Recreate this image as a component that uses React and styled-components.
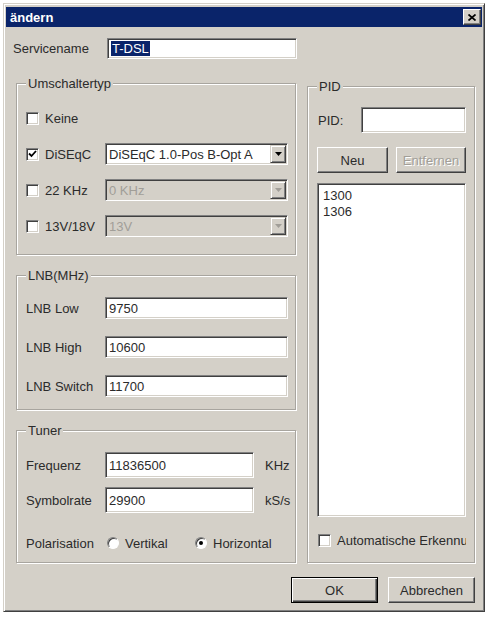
import React from "react"
import styled, { createGlobalStyle } from "styled-components"

const Face = "#d4d0c8"
const Shadow = "#808080"
const DarkShadow = "#404040"
const Highlight = "#ffffff"
const Ink = "#2b2b2b"
const GreyInk = "#a19e98"
const Navy = "#0a246a"

const GlobalStyle = createGlobalStyle`
  html, body {
    margin: 0;
    background: #fff;
  }
  body {
    font-family: "Liberation Sans", Arial, sans-serif;
    font-size: 13px;
    color: ${Ink};
  }
  * {
    box-sizing: border-box;
  }
`

const sunken = `
  border: 1px solid;
  border-color: ${Shadow} ${Highlight} ${Highlight} ${Shadow};
  box-shadow: inset 1px 1px 0 ${DarkShadow}, inset -1px -1px 0 ${Face};
`

const raised = `
  border: 1px solid;
  border-color: ${Highlight} ${DarkShadow} ${DarkShadow} ${Highlight};
  box-shadow: inset -1px -1px 0 ${Shadow};
`

const Window = styled.div`
  width: 482px;
  height: 609px;
  margin: 3px 0 0 3px;
  padding: 3px 2px 2px 2px;
  display: flex;
  flex-direction: column;
  background: ${Face};
  border: 1px solid;
  border-color: ${Face} ${DarkShadow} ${DarkShadow} ${Face};
  box-shadow: inset 1px 1px 0 ${Highlight}, inset -1px -1px 0 ${Shadow};
`

const TitleBar = styled.div`
  display: flex;
  align-items: center;
  height: 20px;
  padding-left: 4px;
  background: ${Navy};
`

const Title = styled.span`
  color: #fff;
  font-weight: bold;
  font-size: 13px;
`

const CloseButton = styled.div`
  display: flex;
  align-items: center;
  justify-content: center;
  width: 18px;
  height: 16px;
  margin-left: auto;
  margin-right: 1px;
  background: ${Face};
  ${raised}
`

const Body = styled.div`
  flex: 1;
  display: flex;
  flex-direction: column;
  padding: 11px 7px 6px 10px;
`

const ServiceRow = styled.div`
  display: flex;
  align-items: center;
  margin-left: -3px;
`

const RowLabel = styled.span`
  width: ${(p) => p.$width || 94}px;
  white-space: nowrap;
`

const TextField = styled.div`
  display: flex;
  align-items: center;
  width: ${(p) => (p.$width ? `${p.$width}px` : "100%")};
  height: ${(p) => p.$height || 22}px;
  padding-left: 3px;
  background: #fff;
  white-space: nowrap;
  ${sunken}
`

const Selection = styled.span`
  background: ${Navy};
  color: #fff;
  padding: 0 1px;
  line-height: 15px;
`

const Columns = styled.div`
  display: flex;
  gap: 11px;
  margin-top: 24px;
`

const LeftColumn = styled.div`
  width: 280px;
  display: flex;
  flex-direction: column;
  gap: 20px;
`

const GroupBox = styled.div`
  display: flex;
  flex-direction: column;
  padding: 0 ${(p) => p.$pr || 8}px ${(p) => p.$pb}px 9px;
  border: 1px solid #a8a59f;
  box-shadow: inset 1px 1px 0 ${Highlight}, 1px 1px 0 ${Highlight};
`

const PidGroup = styled(GroupBox)`
  width: 168px;
  margin-top: 3px;
`

const Legend = styled.span`
  align-self: flex-start;
  margin: -8px 0 ${(p) => p.$mb}px 0;
  padding: 0 2px;
  line-height: 15px;
  background: ${Face};
`

const Rows = styled.div`
  display: flex;
  flex-direction: column;
  gap: ${(p) => p.$gap}px;
`

const FieldRow = styled.div`
  display: grid;
  grid-template-columns: ${(p) => p.$cols};
  align-items: center;
  height: ${(p) => p.$height || 22}px;
  margin-top: ${(p) => p.$top || 0}px;
`

const CheckLabel = styled.label`
  display: flex;
  align-items: center;
  gap: 6px;
  white-space: nowrap;
  overflow: hidden;
`

const Box = styled.span`
  flex: none;
  display: flex;
  align-items: center;
  justify-content: center;
  width: 13px;
  height: 13px;
  background: #fff;
  ${sunken}
`

const RadioCircle = styled.span`
  flex: none;
  display: flex;
  align-items: center;
  justify-content: center;
  width: 12px;
  height: 12px;
  border-radius: 50%;
  background: #fff;
  border: 1px solid;
  border-color: ${Shadow} ${Highlight} ${Highlight} ${Shadow};
  box-shadow: inset 1px 1px 0 ${DarkShadow};
`

const RadioDot = styled.span`
  width: 4px;
  height: 4px;
  border-radius: 50%;
  background: #000;
`

const Select = styled.div`
  display: flex;
  align-items: center;
  height: 22px;
  padding-left: 3px;
  background: ${(p) => (p.$disabled ? Face : "#fff")};
  color: ${(p) => (p.$disabled ? GreyInk : Ink)};
  ${sunken}
`

const SelectText = styled.span`
  flex: 1;
  white-space: nowrap;
  overflow: hidden;
`

const DropButton = styled.span`
  display: flex;
  align-items: center;
  justify-content: center;
  width: 16px;
  height: 18px;
  margin: 1px;
  background: ${Face};
  border: 1px solid;
  border-color: ${Face} ${DarkShadow} ${DarkShadow} ${Face};
  box-shadow: inset 1px 1px 0 ${Highlight}, inset -1px -1px 0 ${Shadow};
`

const Unit = styled.span`
  padding-left: 11px;
`

const PidRow = styled.div`
  display: flex;
  align-items: center;
  justify-content: space-between;
  padding-left: 1px;
`

const ButtonRow = styled.div`
  display: flex;
  gap: 8px;
  margin-top: 14px;
`

const PushButton = styled.button`
  width: ${(p) => p.$width}px;
  height: 26px;
  padding: 0;
  font: inherit;
  color: ${(p) => (p.disabled ? GreyInk : Ink)};
  text-shadow: ${(p) => (p.disabled ? `1px 1px 0 ${Highlight}` : "none")};
  background: ${Face};
  ${raised}
  ${(p) =>
    p.$default &&
    `
    border-color: #000;
    box-shadow: inset 1px 1px 0 ${Highlight}, inset -1px -1px 0 ${DarkShadow}, inset -2px -2px 0 ${Shadow};
  `}
`

const ListBox = styled.div`
  flex: 1;
  margin-top: 10px;
  padding: 4px 5px;
  background: #fff;
  line-height: 16px;
  ${sunken}
`

const AutoRow = styled(CheckLabel)`
  margin-top: 16px;
  height: 14px;
  padding-left: 1px;
`

const Footer = styled.div`
  display: flex;
  justify-content: flex-end;
  gap: 10px;
  margin-top: 14px;
`

const Arrow = ({ disabled }) => (
  <svg width="7" height="4" viewBox="0 0 7 4">
    <path d="M0 0h7L3.5 4z" fill={disabled ? GreyInk : "#000"} />
  </svg>
)

const CheckBox = ({ checked }) => (
  <Box>
    {checked && (
      <svg width="9" height="8" viewBox="0 0 9 8">
        <path d="M1 3.5l2.5 2.5L8 1" stroke="#000" strokeWidth="1.8" fill="none" />
      </svg>
    )}
  </Box>
)

const Radio = ({ checked, children }) => (
  <CheckLabel>
    <RadioCircle>{checked && <RadioDot />}</RadioCircle>
    {children}
  </CheckLabel>
)

const Dropdown = ({ value, disabled }) => (
  <Select $disabled={disabled}>
    <SelectText>{value}</SelectText>
    <DropButton>
      <Arrow disabled={disabled} />
    </DropButton>
  </Select>
)

const switchRows = [
  { label: "Keine" },
  { label: "DiSEqC", checked: true, value: "DiSEqC 1.0-Pos B-Opt A" },
  { label: "22 KHz", value: "0 KHz", disabled: true },
  { label: "13V/18V", value: "13V", disabled: true },
]

const lnbRows = [
  { label: "LNB Low", value: "9750" },
  { label: "LNB High", value: "10600" },
  { label: "LNB Switch", value: "11700" },
]

const App = () => (
  <>
    <GlobalStyle />
    <Window>
      <TitleBar>
        <Title>ändern</Title>
        <CloseButton>
          <svg width="8" height="7" viewBox="0 0 8 7">
            <path d="M0.5 0.5l7 6M7.5 0.5l-7 6" stroke="#000" strokeWidth="1.7" />
          </svg>
        </CloseButton>
      </TitleBar>
      <Body>
        <ServiceRow>
          <RowLabel>Servicename</RowLabel>
          <TextField $width={190} $height={21}>
            <Selection>T-DSL</Selection>
          </TextField>
        </ServiceRow>

        <Columns>
          <LeftColumn>
            <GroupBox $pb={17}>
              <Legend $mb={16}>Umschaltertyp</Legend>
              <Rows $gap={14}>
                {switchRows.map((row) => (
                  <FieldRow key={row.label} $cols="79px 183px">
                    <CheckLabel>
                      <CheckBox checked={row.checked} />
                      {row.label}
                    </CheckLabel>
                    {row.value && <Dropdown value={row.value} disabled={row.disabled} />}
                  </FieldRow>
                ))}
              </Rows>
            </GroupBox>

            <GroupBox $pb={12}>
              <Legend $mb={14}>LNB(MHz)</Legend>
              <Rows $gap={17}>
                {lnbRows.map((row) => (
                  <FieldRow key={row.label} $cols="79px 183px">
                    <span>{row.label}</span>
                    <TextField>{row.value}</TextField>
                  </FieldRow>
                ))}
              </Rows>
            </GroupBox>

            <GroupBox $pb={9}>
              <Legend $mb={14}>Tuner</Legend>
              <Rows $gap={9}>
                <FieldRow $cols="79px 149px auto" $height={26}>
                  <span>Frequenz</span>
                  <TextField $height={26}>11836500</TextField>
                  <Unit>KHz</Unit>
                </FieldRow>
                <FieldRow $cols="79px 149px auto" $height={26}>
                  <span>Symbolrate</span>
                  <TextField $height={26}>29900</TextField>
                  <Unit>kS/s</Unit>
                </FieldRow>
                <FieldRow $cols="81px 88px auto" $height={20} $top={11}>
                  <span>Polarisation</span>
                  <Radio>Vertikal</Radio>
                  <Radio checked>Horizontal</Radio>
                </FieldRow>
              </Rows>
            </GroupBox>
          </LeftColumn>

          <PidGroup $pb={15}>
            <Legend $mb={13}>PID</Legend>
            <PidRow>
              <span>PID:</span>
              <TextField $width={105} $height={26} />
            </PidRow>
            <ButtonRow>
              <PushButton $width={71}>Neu</PushButton>
              <PushButton $width={70} disabled>
                Entfernen
              </PushButton>
            </ButtonRow>
            <ListBox>
              <div>1300</div>
              <div>1306</div>
            </ListBox>
            <AutoRow>
              <CheckBox />
              Automatische Erkennung
            </AutoRow>
          </PidGroup>
        </Columns>

        <Footer>
          <PushButton $width={87} $default>
            OK
          </PushButton>
          <PushButton $width={87}>Abbrechen</PushButton>
        </Footer>
      </Body>
    </Window>
  </>
)

export default App
